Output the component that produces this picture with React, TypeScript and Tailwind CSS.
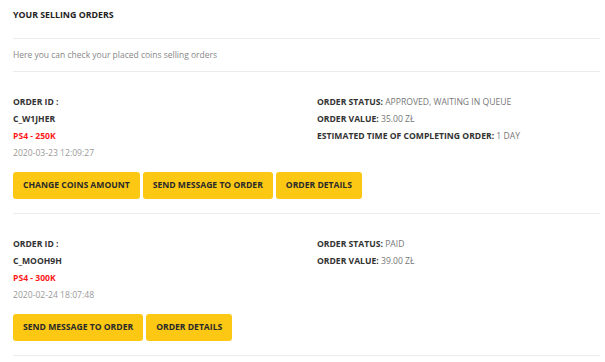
import React from 'react';

interface Order {
  id: string;
  product: string;
  date: string;
  status: string;
  value: string;
  eta?: string;
  buttons: string[];
}

const ORDERS: Order[] = [
  {
    id: 'C_W1JHER',
    product: 'PS4 - 250K',
    date: '2020-03-23 12:09:27',
    status: 'APPROVED, WAITING IN QUEUE',
    value: '35.00 ZŁ',
    eta: '1 DAY',
    buttons: ['CHANGE COINS AMOUNT', 'SEND MESSAGE TO ORDER', 'ORDER DETAILS'],
  },
  {
    id: 'C_MOOH9H',
    product: 'PS4 - 300K',
    date: '2020-02-24 18:07:48',
    status: 'PAID',
    value: '39.00 ZŁ',
    buttons: ['SEND MESSAGE TO ORDER', 'ORDER DETAILS'],
  },
];

function Field({ label, value }: { label: string; value: string }) {
  return (
    <div className="leading-[17px]">
      <span className="font-bold text-[8.6px] text-[#333]">{label}: </span>
      <span className="text-[8.6px] text-[#777]">{value}</span>
    </div>
  );
}

export default function App() {
  return (
    <div
      className="w-[605px] h-[362px] bg-white pl-[13px] pr-[5px] text-[8.6px] overflow-hidden"
      style={{ fontFamily: '"Open Sans", "Liberation Sans", sans-serif' }}
    >
      {/* Header */}
      <div className="h-[39px] flex items-center border-b border-[#ececec]">
        <span className="text-[8.8px] font-bold text-[#222] -mt-[7px]">YOUR SELLING ORDERS</span>
      </div>
      <div className="h-[33px] flex items-center border-b border-[#ececec]">
        <span className="text-[8.5px] text-[#888]">Here you can check your placed coins selling orders</span>
      </div>

      {/* Orders */}
      {ORDERS.map(o => (
        <div key={o.id} className="pt-[22px] pb-[14px] border-b border-[#ececec]">
          <div className="flex">
            <div className="w-[304px] leading-[17px]">
              <div className="font-bold text-[#333]">ORDER ID :</div>
              <div className="font-bold text-[#333]">{o.id}</div>
              <div className="font-bold text-[#ff1a1a]">{o.product}</div>
              <div className="text-[#999]">{o.date}</div>
            </div>
            <div>
              <Field label="ORDER STATUS" value={o.status} />
              <Field label="ORDER VALUE" value={o.value} />
              {o.eta && <Field label="ESTIMATED TIME OF COMPLETING ORDER" value={o.eta} />}
            </div>
          </div>
          <div className="flex gap-[3px] mt-[10px]">
            {o.buttons.map(b => (
              <button
                key={b}
                className="h-[27px] px-[10px] rounded-[3px] bg-[#fcc814] text-[#2a2a2a] font-bold text-[8.6px]"
              >
                {b}
              </button>
            ))}
          </div>
        </div>
      ))}
    </div>
  );
}
